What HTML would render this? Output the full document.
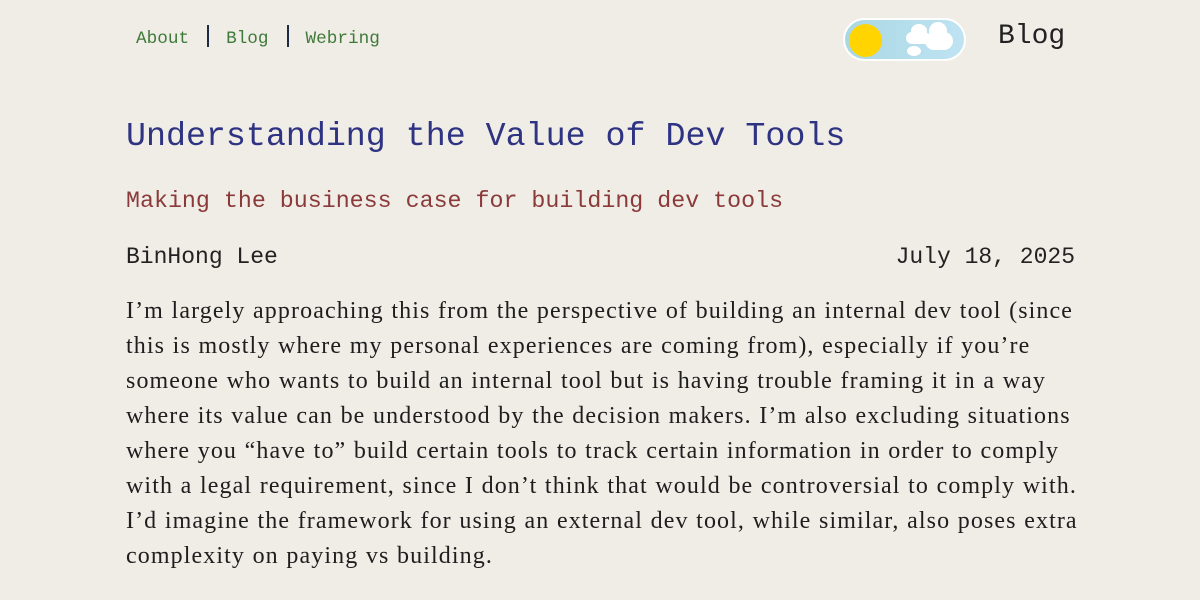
<!DOCTYPE html>
<html><head><meta charset="utf-8"><style>
body{margin:0;background:#f0ece6;width:1200px;height:600px;overflow:hidden;position:relative;font-family:"Liberation Mono",monospace}
.nav{position:absolute;left:136px;top:25px;font-size:17.7px;color:#3f7a3a}
.nav .sep{display:inline-block;width:2px;height:22px;background:#1e2b44;vertical-align:-4px;margin:0 17px 0 18px}
.toggle{position:absolute;left:843px;top:18px;width:123px;height:43px;border-radius:22px;border:2px solid #fff;background:linear-gradient(90deg,#a9d8e2,#bfe3f3);box-sizing:border-box;overflow:hidden}
.sun{position:absolute;left:4px;top:4px;width:33px;height:33px;border-radius:50%;background:#ffd400}
.cl{position:absolute;background:#fff;border-radius:50%}
.hb{position:absolute;left:998px;top:21px;font-size:28px;color:#222}
h1{position:absolute;left:126px;top:117px;margin:0;font-weight:normal;font-size:33.3px;color:#2e3382}
.sub{position:absolute;left:126px;top:188px;font-size:23.3px;color:#8b3a3a}
.au{position:absolute;left:126px;top:244px;font-size:23px;color:#222}
.dt{position:absolute;right:125px;top:244px;font-size:23px;color:#222}
.body{position:absolute;left:126px;top:294px;font-family:"Liberation Serif",serif;font-size:24px;line-height:35px;color:#1e1e1e;letter-spacing:1.1px;word-spacing:0.5px}
.body div{white-space:nowrap}
</style></head><body>
<div class="nav">About<span class="sep"></span>Blog<span class="sep"></span>Webring</div>
<div class="toggle"><div class="sun"></div>
<div class="cl" style="left:66px;top:4px;width:16px;height:14px"></div>
<div class="cl" style="left:61px;top:12px;width:24px;height:12px;border-radius:8px"></div>
<div class="cl" style="left:84px;top:2px;width:18px;height:18px"></div>
<div class="cl" style="left:80px;top:12px;width:28px;height:18px;border-radius:9px"></div>
<div class="cl" style="left:62px;top:26px;width:14px;height:10px"></div>
</div>
<div class="hb">Blog</div>
<h1>Understanding the Value of Dev Tools</h1>
<div class="sub">Making the business case for building dev tools</div>
<div class="au">BinHong Lee</div>
<div class="dt">July 18, 2025</div>
<div class="body">
<div>I’m largely approaching this from the perspective of building an internal dev tool (since</div>
<div>this is mostly where my personal experiences are coming from), especially if you’re</div>
<div>someone who wants to build an internal tool but is having trouble framing it in a way</div>
<div>where its value can be understood by the decision makers. I’m also excluding situations</div>
<div>where you “have to” build certain tools to track certain information in order to comply</div>
<div>with a legal requirement, since I don’t think that would be controversial to comply with.</div>
<div>I’d imagine the framework for using an external dev tool, while similar, also poses extra</div>
<div>complexity on paying vs building.</div>
</div>
</body></html>
